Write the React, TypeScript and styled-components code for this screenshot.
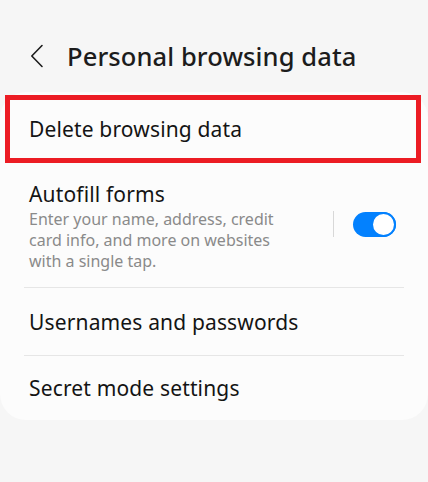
import React from "react";
import styled, { createGlobalStyle } from "styled-components";

const Global = createGlobalStyle`
  html, body { margin: 0; padding: 0; background: #f6f6f6; }
  body { font-family: "Noto Sans", Roboto, sans-serif; color: #111; }
`;

const Page = styled.div`
  width: 428px;
  height: 482px;
  background: #f6f6f6;
  display: flex;
  flex-direction: column;
  box-sizing: border-box;
`;

const Header = styled.header`
  height: 92px;
  display: flex;
  align-items: center;
  padding: 20px 0 0 30px;
  box-sizing: border-box;
  gap: 23px;
`;

const BackButton = styled.span`
  display: flex;
  width: 14px;
  height: 24px;
`;

const Title = styled.h1`
  margin: 0;
  font-size: 25.5px;
  font-weight: 500;
  color: #1c1c1c;
  letter-spacing: 0.1px;
`;

const Card = styled.section`
  background: #fcfcfc;
  border-radius: 26px;
  padding: 3px 0 0;
  display: flex;
  flex-direction: column;
`;

const Row = styled.div<{ $highlight?: boolean; $height: number }>`
  display: flex;
  align-items: center;
  min-height: ${(p) => p.$height}px;
  box-sizing: border-box;
  padding: 0 24px 0 29px;
  ${(p) =>
    p.$highlight
      ? `margin: 0 7px 0 5px; border: 5px solid #ec1c24; padding: 0 19px 0 19px;`
      : ``}
`;

const Label = styled.div`
  font-size: 21px;
  color: #141414;
  letter-spacing: 0.15px;
`;

const TextBlock = styled.div`
  flex: 1;
  display: flex;
  flex-direction: column;
  gap: 1px;
  margin-top: 2px;
`;

const Description = styled.div`
  font-size: 16px;
  line-height: 21px;
  color: #8a8a8a;
  width: 260px;
`;

const Divider = styled.hr`
  margin: 0 24px;
  border: none;
  border-top: 1px solid #e6e6e6;
`;

const SwitchArea = styled.div`
  display: flex;
  align-items: center;
  gap: 19px;
  margin-right: 8px;
  margin-top: -2px;
`;

const VLine = styled.span`
  width: 1px;
  height: 26px;
  background: #d8d8d8;
`;

const Switch = styled.span`
  position: relative;
  width: 43px;
  height: 25px;
  border-radius: 13px;
  background: #0381fe;
  display: flex;
  justify-content: flex-end;
  box-sizing: border-box;
`;

const Knob = styled.span`
  width: 25px;
  height: 25px;
  border-radius: 50%;
  background: #fff;
  border: 2px solid #0381fe;
  box-sizing: border-box;
`;

export default function App() {
  return (
    <>
      <Global />
      <Page>
        <Header>
          <BackButton>
            <svg width="14" height="24" viewBox="0 0 14 24" fill="none">
              <path d="M12 1.5 L1.8 12 L12 22.5" stroke="#1c1c1c" strokeWidth="1.6" strokeLinecap="round" strokeLinejoin="round" />
            </svg>
          </BackButton>
          <Title>Personal browsing data</Title>
        </Header>
        <Card>
          <Row $highlight $height={68}>
            <Label>Delete browsing data</Label>
          </Row>
          <Row $height={124}>
            <TextBlock>
              <Label>Autofill forms</Label>
              <Description>
                Enter your name, address, credit card info, and more on websites with a single tap.
              </Description>
            </TextBlock>
            <SwitchArea>
              <VLine />
              <Switch>
                <Knob />
              </Switch>
            </SwitchArea>
          </Row>
          <Divider />
          <Row $height={67}>
            <Label>Usernames and passwords</Label>
          </Row>
          <Divider />
          <Row $height={64}>
            <Label>Secret mode settings</Label>
          </Row>
        </Card>
      </Page>
    </>
  );
}
